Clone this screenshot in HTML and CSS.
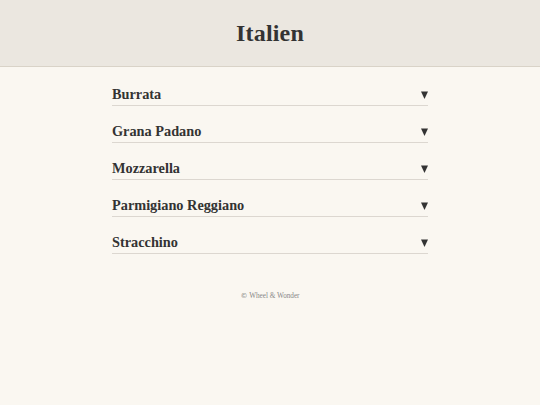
FILE: index.html
```html
<!DOCTYPE html>
<html lang="de">
<head>
<meta charset="utf-8">
<title>Italien</title>
<link rel="stylesheet" href="styles.css">
</head>
<body>
<header class="site-header">
  <h1 class="title">Italien</h1>
</header>
<main class="list">
  <div class="row"><span class="name">Burrata</span><svg class="caret" width="7" height="8" viewBox="0 0 7 8"><polygon points="0,0.5 7,0.5 3.5,8" fill="#333"/></svg></div>
  <div class="row"><span class="name">Grana Padano</span><svg class="caret" width="7" height="8" viewBox="0 0 7 8"><polygon points="0,0.5 7,0.5 3.5,8" fill="#333"/></svg></div>
  <div class="row"><span class="name">Mozzarella</span><svg class="caret" width="7" height="8" viewBox="0 0 7 8"><polygon points="0,0.5 7,0.5 3.5,8" fill="#333"/></svg></div>
  <div class="row"><span class="name">Parmigiano Reggiano</span><svg class="caret" width="7" height="8" viewBox="0 0 7 8"><polygon points="0,0.5 7,0.5 3.5,8" fill="#333"/></svg></div>
  <div class="row"><span class="name">Stracchino</span><svg class="caret" width="7" height="8" viewBox="0 0 7 8"><polygon points="0,0.5 7,0.5 3.5,8" fill="#333"/></svg></div>
</main>
<footer class="footer"><span class="copy">©</span> Wheel &amp; Wonder</footer>
</body>
</html>
```
FILE: styles.css
```css
html, body {
  margin: 0;
  padding: 0;
}
body {
  background: #faf7f1;
  color: #333;
  font-family: "Liberation Serif", "DejaVu Serif", serif;
  height: 405px;
}
.site-header {
  background: #ebe7e0;
  border-bottom: 1px solid #d9d3c8;
  height: 66px;
  display: flex;
  align-items: center;
  justify-content: center;
}
.title {
  margin: 0;
  font-size: 24px;
  font-weight: bold;
  color: #333;
  letter-spacing: 0.2px;
}
.list {
  width: 316px;
  margin: 0 auto;
  padding-top: 2px;
}
.row {
  display: flex;
  align-items: center;
  justify-content: space-between;
  padding: 15px 0 1px;
  line-height: 20px;
  border-bottom: 1px solid #dcd7d0;
}
.name {
  font-size: 14.3px;
  font-weight: bold;
}
.caret {
  display: block;
  margin-top: 2px;
}
.footer {
  text-align: center;
  font-size: 7.2px;
  color: #888;
  margin-top: 38px;
}
.copy {
  font-family: "DejaVu Sans", sans-serif;
  font-size: 7px;
}
```
